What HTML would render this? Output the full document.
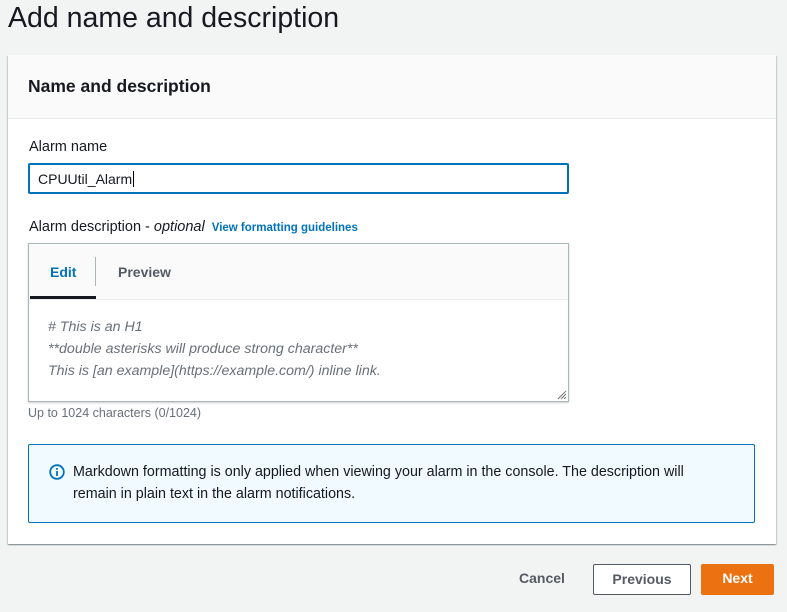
<!DOCTYPE html>
<html><head><meta charset="utf-8"><style>
*{box-sizing:border-box;margin:0;padding:0}
body{width:787px;height:612px;background:#f2f3f3;font-family:"Liberation Sans",sans-serif;color:#16191f;position:relative;overflow:hidden}
.abs{position:absolute}
h1{position:absolute;left:8px;top:0;font-size:28.5px;font-weight:400;line-height:36px;color:#16191f}
.card{left:8px;top:55px;width:768px;height:489px;background:#fff;box-shadow:0 1px 1px rgba(0,28,36,.3),1px 1px 1px rgba(0,28,36,.15),-1px 1px 1px rgba(0,28,36,.15)}
.hdr{left:0;top:0;width:768px;height:64px;background:#fafafa;border-bottom:1px solid #eaeded}
.hdr div{position:absolute;left:20px;top:21px;font-size:17.5px;font-weight:700}
.lbl{font-size:14.5px;line-height:18px}
.input{left:28px;top:163px;width:541px;height:31px;border:2px solid #0073bb;border-radius:2px;font-size:14px;padding:6px 8px;line-height:16px}
.ed{left:28px;top:243px;width:541px;height:159px;border:1px solid #aab7b8;box-shadow:0 1px 2px rgba(0,0,0,.2)}
.tabs{left:0;top:0;width:539px;height:56px;background:#fafafa;border-bottom:1px solid #eaeded}
.ta{font-style:italic;color:#687078;font-size:14.2px;line-height:22px;left:19px;top:72px}
.info{left:28px;top:444px;width:727px;height:79px;background:#f1faff;border:1px solid #0073bb;border-radius:2px}
.btn{font-size:14px;font-weight:700;text-align:center;line-height:29px;height:31px;border-radius:2px}
</style></head><body>
<h1>Add name and description</h1>
<div class="abs card"><div class="abs hdr"><div>Name and description</div></div></div>
<div class="abs lbl" style="left:29px;top:138px">Alarm name</div>
<div class="abs input">CPUUtil_Alarm<span style="border-left:1px solid #000;margin-left:1px"></span></div>
<div class="abs lbl" style="left:29px;top:218px">Alarm description - <i>optional</i> <b style="color:#0073bb;font-size:11.5px;margin-left:3px">View formatting guidelines</b></div>
<div class="abs ed">
 <div class="abs tabs">
  <div class="abs" style="left:21px;top:20px;font-size:14px;font-weight:700;color:#0073bb">Edit</div>
  <div class="abs" style="left:66px;top:13px;width:1px;height:29px;background:#aab7b8"></div>
  <div class="abs" style="left:89px;top:20px;font-size:14px;font-weight:700;color:#545b64">Preview</div>
  <div class="abs" style="left:1px;top:52px;width:66px;height:3px;background:#16191f"></div>
 </div>
 <div class="abs ta"># This is an H1<br>**double asterisks will produce strong character**<br>This is [an example](https://example.com/) inline link.</div>
 <svg class="abs" style="right:1px;bottom:1px" width="12" height="12"><path d="M11 3L3 11M11 6L6 11M11 9L9 11" stroke="#777" stroke-width="1"/></svg>
</div>
<div class="abs" style="left:28px;top:406px;font-size:12.5px;color:#687078">Up to 1024 characters (0/1024)</div>
<div class="abs info">
 <svg class="abs" style="left:20px;top:19px" width="16" height="16"><circle cx="8" cy="8" r="6.8" fill="none" stroke="#0073bb" stroke-width="1.8"/><rect x="7.1" y="7" width="1.8" height="5" fill="#0073bb"/><rect x="7.1" y="4" width="1.8" height="1.8" fill="#0073bb"/></svg>
 <div class="abs" style="left:44px;top:16px;font-size:14.3px;line-height:22px;width:640px">Markdown formatting is only applied when viewing your alarm in the console. The description will remain in plain text in the alarm notifications.</div>
</div>
<div class="abs btn" style="left:512px;top:564px;width:60px;color:#545b64">Cancel</div>
<div class="abs btn" style="left:593px;top:564px;width:98px;border:1px solid #545b64;background:#fff;color:#545b64">Previous</div>
<div class="abs btn" style="left:701px;top:564px;width:73px;background:#ec7211;color:#fff">Next</div>
</body></html>
